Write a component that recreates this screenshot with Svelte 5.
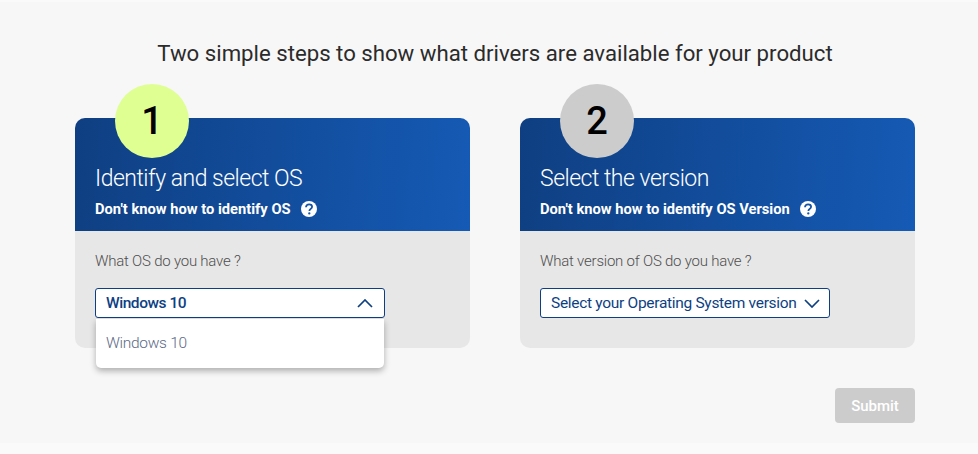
<script>
  const steps = [
    {
      num: 1, title: 'Identify and select OS', help: "Don't know how to identify OS",
      label: 'What OS do you have ?', value: 'Windows 10', open: true
    },
    {
      num: 2, title: 'Select the version', help: "Don't know how to identify OS Version",
      label: 'What version of OS do you have ?', value: 'Select your Operating System version', open: false
    }
  ];
</script>

<main class="page">
  <h2 class="heading">Two simple steps to show what drivers are available for your product</h2>

  <div class="cards">
    {#each steps as step}
      <section class="card">
        <div class="badge" class:active={step.open}>{step.num}</div>
        <header class="card-head">
          <h3>{step.title}</h3>
          <p class="help">
            <span>{step.help}</span>
            <svg viewBox="0 0 16 16" width="16" height="16" aria-hidden="true">
              <circle cx="8" cy="8" r="8" fill="#fff" />
              <path d="M5 6.2c0-1.8 1.3-2.9 3.1-2.9s3 1.1 3 2.5c0 1.1-.7 1.7-1.5 2.2-.8.5-1.2.9-1.2 1.9" fill="none" stroke="#1553a3" stroke-width="1.8" />
              <circle cx="8.3" cy="12.4" r="1.15" fill="#1553a3" />
            </svg>
          </p>
        </header>
        <div class="card-body">
          <p class="label">{step.label}</p>
          <div class="select" class:open={step.open}>
            <span>{step.value}</span>
            <svg viewBox="0 0 16 9" width="16" height="9" aria-hidden="true">
              {#if step.open}
                <path d="M1 8l7-7 7 7" fill="none" stroke="#0e3f83" stroke-width="1.7" />
              {:else}
                <path d="M1 1l7 7 7-7" fill="none" stroke="#0e3f83" stroke-width="1.7" />
              {/if}
            </svg>
            {#if step.open}
              <div class="menu">Windows 10</div>
            {/if}
          </div>
        </div>
      </section>
    {/each}
  </div>

  <div class="actions">
    <button class="submit" disabled>Submit</button>
  </div>
</main>

<style>
  :global(body) {
    background: #fafafa;
    font-family: Roboto, "Noto Sans", sans-serif;
  }

  .page {
    margin-top: 2px;
    height: 441px;
    box-sizing: border-box;
    padding: 37px 63px 0 75px;
    background: #f7f7f7;
  }

  .heading {
    margin: 0;
    text-align: center;
    font-size: 22.2px;
    line-height: 28px;
    font-weight: 400;
    color: #2b2b2b;
  }

  .cards {
    display: flex;
    gap: 50px;
    margin-top: 51px;
  }

  .card {
    position: relative;
    width: 395px;
    height: 230px;
    display: flex;
    flex-direction: column;
    border-radius: 10px;
    background: #e7e7e7;
  }

  .badge {
    position: absolute;
    left: 40px;
    top: -34px;
    width: 74px;
    height: 74px;
    border-radius: 50%;
    background: #ccc;
    color: #000;
    font-size: 38px;
    font-weight: 500;
    line-height: 74px;
    text-align: center;
  }

  .badge.active {
    background: #dfff93;
  }

  .card-head {
    height: 113px;
    box-sizing: border-box;
    padding: 46px 20px 0;
    border-radius: 10px 10px 0 0;
    background: linear-gradient(95deg, #0f3f82 0%, #155ab5 100%);
    color: #fff;
  }

  h3 {
    margin: 0;
    font-size: 23px;
    line-height: 30px;
    font-weight: 300;
    letter-spacing: -0.5px;
  }

  .help {
    display: flex;
    align-items: center;
    gap: 10px;
    margin: 5px 0 0;
    font-size: 14.7px;
    line-height: 20px;
    font-weight: 700;
  }

  .card-body {
    padding: 20px 20px 0;
  }

  .label {
    margin: 0;
    font-size: 15px;
    line-height: 20px;
    font-weight: 300;
    letter-spacing: -0.22px;
    color: #4e4e4e;
  }

  .select {
    position: relative;
    display: inline-flex;
    align-items: center;
    justify-content: space-between;
    gap: 7px;
    margin-top: 17px;
    width: 290px;
    height: 30px;
    box-sizing: border-box;
    padding: 0 9px 0 10px;
    border: 1px solid #0e3f83;
    border-radius: 3px;
    background: #fff;
    color: #0e3f83;
    font-size: 15.5px;
    letter-spacing: -0.3px;
  }

  .select.open {
    display: flex;
    padding-right: 11px;
    font-weight: 500;
    letter-spacing: -0.45px;
  }

  .menu {
    position: absolute;
    left: 0;
    top: 30px;
    width: 288px;
    height: 49px;
    box-sizing: border-box;
    padding: 14px 10px 0;
    border-radius: 0 0 5px 5px;
    background: #fff;
    box-shadow: 0 3px 6px rgba(0, 0, 0, 0.3);
    color: #5c6a86;
    font-size: 15.5px;
    font-weight: 300;
    line-height: 20px;
    letter-spacing: -0.3px;
  }

  .actions {
    display: flex;
    justify-content: flex-end;
    margin-top: 40px;
  }

  .submit {
    width: 80px;
    height: 35px;
    border: 0;
    border-radius: 4px;
    background: #ccc;
    color: #fff;
    font: 500 15px Roboto, sans-serif;
  }
</style>
